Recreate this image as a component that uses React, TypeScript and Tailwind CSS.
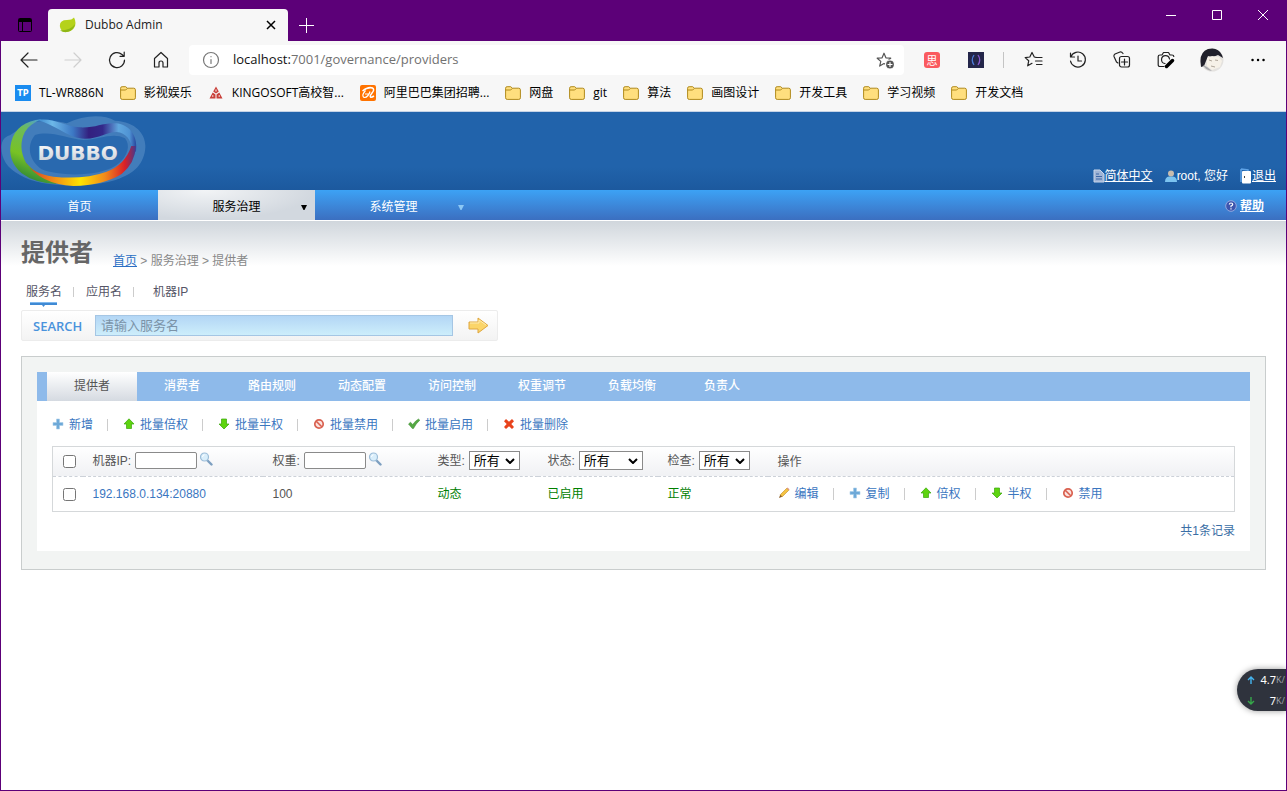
import type { ReactNode } from "react";
import clsx from "clsx";

const UI_FONT = "font-['Open_Sans','Noto_Sans_CJK_SC',sans-serif]";
const PAGE_FONT = "font-['Liberation_Sans','Noto_Sans_CJK_SC',sans-serif]";

/* --- ICONS --- */

function LineIcon({ size = 20, className, children }: { size?: number; className?: string; children: ReactNode }) {
  return (
    <svg
      width={size}
      height={size}
      viewBox="0 0 20 20"
      fill="none"
      stroke="currentColor"
      strokeWidth="1.2"
      strokeLinecap="round"
      strokeLinejoin="round"
      className={clsx("shrink-0", className)}
      aria-hidden="true"
    >
      {children}
    </svg>
  );
}

const STAR = "M8 2.200l1.900 4.600 4.800.4-3.500 3.200 1 4.700L8 12.600l-4.300 2.500 1.100-4.700L1.200 7.200 6.100 6.800z";

function FolderIcon() {
  return (
    <svg width="16" height="16" viewBox="0 0 16 16" className="shrink-0" aria-hidden="true">
      <path d="M.6 3.200q0-1.500 1.500-1.500h3.600l1.700 1.500h6.300q1.700 0 1.700 1.600v8q0 1.600-1.600 1.600H2.200q-1.600 0-1.600-1.600z" fill="#ffdf7e" stroke="#b08a1c" />
      <path d="M.8 5h4.900l1.700-1.700" fill="none" stroke="#b08a1c" />
    </svg>
  );
}

function TpIcon() {
  return (
    <span className="flex h-4 w-4 shrink-0 items-center justify-center bg-[#1a8cf0] pt-px font-['DejaVu_Sans',sans-serif] text-[8px] font-bold leading-none text-white">
      TP
    </span>
  );
}

function KingoIcon() {
  return (
    <svg width="16" height="16" viewBox="0 0 16 16" className="shrink-0" aria-hidden="true">
      <path d="M8 1.500l2.800 5L8 8.500l-2.800-2zM4.700 7.500L7.500 9.500v4H1.500zM11.300 7.500L8.500 9.500v4h6z" fill="#c9403a" />
      <path d="M8 4.500v2M4.800 10.200v1.600M11.200 10.200v1.600" stroke="#fff" />
    </svg>
  );
}

function AliIcon() {
  return (
    <svg width="16" height="16" viewBox="0 0 16 16" className="shrink-0" aria-hidden="true">
      <rect width="16" height="16" rx="2" fill="#ff7300" />
      <path d="M2.500 6Q8 1.500 12.500 3q2.500 1.500-.5 5-2.500 3-1.500 4 1 .6 3.500-1" fill="none" stroke="#fff" strokeWidth="1.500" />
      <path d="M5.500 5.500q-4 4.500-2 6.500 1.800 1.500 4.500-1.500 1.500-1.700 2-4M5 9h3.500" fill="none" stroke="#fff" strokeWidth="1.200" />
    </svg>
  );
}

function SmallIcon({ name }: { name: IconName }) {
  return (
    <svg width="12" height="12" viewBox="0 0 12 12" className="mb-[2px] shrink-0" aria-hidden="true">
      {SMALL_ICONS[name]}
    </svg>
  );
}

type IconName = "add" | "up" | "down" | "ban" | "check" | "remove" | "edit";

const SMALL_ICONS: Record<IconName, ReactNode> = {
  add: <path d="M4.500 1h3v3.500H11v3H7.500V11h-3V7.500H1v-3h3.500z" fill="#6ea9d8" stroke="#a8cdea" strokeWidth=".6" />,
  up: <path d="M6 .8L11 6H8.500v4.500h-5V6H1z" fill="#5ed40f" stroke="#3aa60c" strokeWidth=".7" />,
  down: <path d="M6 11L1 6h2.500V1h5v5H11z" fill="#5ed40f" stroke="#3aa60c" strokeWidth=".7" />,
  ban: (
    <>
      <circle cx="6" cy="6" r="4.200" fill="#fbe3df" stroke="#d9604f" strokeWidth="1.700" />
      <path d="M3.200 3.200l5.600 5.600" stroke="#d9604f" strokeWidth="1.600" />
    </>
  ),
  check: <path d="M.5 6L2.500 4.200l2.200 2.300Q7.500 2.500 10.500 1l1.300 1.200Q8 5.500 5.500 10.500H4.300z" fill="#55a843" stroke="#3a8a30" strokeWidth=".5" />,
  remove: <path d="M3 1l3 2.800L9 1l2 2.200L8.300 6 11 9l-2 2-3-2.800L3 11 1 9l2.700-3L1 3.200z" fill="#e8431c" />,
  edit: (
    <>
      <path d="M2.200 7.800L8.800 1.200l2 2-6.600 6.600z" fill="#f5c342" stroke="#c08a1e" strokeWidth=".6" />
      <path d="M2.200 7.800L1 11l3.200-1.200z" fill="#8a5a20" />
      <path d="M8.800 1.200l.8-.7 1.900 1.900-.7.800z" fill="#d98c7a" />
    </>
  ),
};

function SearchGlass() {
  return (
    <svg width="14" height="14" viewBox="0 0 14 14" className="mb-[3px] shrink-0" aria-hidden="true">
      <path d="M8.500 8.500l4 4" stroke="#7d9fc0" strokeWidth="2.400" strokeLinecap="round" />
      <circle cx="5.500" cy="5" r="4" fill="#d9eefb" stroke="#9dbdd8" strokeWidth="1.200" />
      <path d="M3.500 5q0-2 2-2.200" stroke="#fff" fill="none" />
    </svg>
  );
}

function DubboLogo() {
  return (
    <svg width="145" height="76" viewBox="3 6 435 228" role="img" aria-label="Dubbo">
      <defs>
        <linearGradient id="green" x1="0.6" y1="0" x2="0.3" y2="1">
          <stop offset="0" stopColor="#4f9fd0" />
          <stop offset=".2" stopColor="#6cbb5c" />
          <stop offset=".6" stopColor="#78c225" />
          <stop offset="1" stopColor="#1d7a3c" />
        </linearGradient>
        <linearGradient id="top" x1="0" y1="0" x2="1" y2="0">
          <stop offset="0" stopColor="#3a86cc" />
          <stop offset=".15" stopColor="#6db8e8" />
          <stop offset=".36" stopColor="#3c78c4" />
          <stop offset=".52" stopColor="#33207f" />
          <stop offset=".66" stopColor="#33298a" />
          <stop offset=".82" stopColor="#5fa6de" />
          <stop offset=".93" stopColor="#4f93d4" />
          <stop offset="1" stopColor="#25449b" />
        </linearGradient>
        <linearGradient id="warm" x1="0" y1="0" x2="1" y2="0">
          <stop offset="0" stopColor="#c9352a" />
          <stop offset=".22" stopColor="#ee7d1a" />
          <stop offset=".5" stopColor="#ffe400" />
          <stop offset=".72" stopColor="#f18a1b" />
          <stop offset=".9" stopColor="#d91f26" />
          <stop offset="1" stopColor="#43388f" />
        </linearGradient>
        <linearGradient id="word" x1="0" y1="0" x2="0" y2="1">
          <stop offset="0" stopColor="#fff" />
          <stop offset="1" stopColor="#c3c9d2" />
        </linearGradient>
      </defs>
      <path
        d="M50 62C80 32 150 25 200 40C250 15 310 12 345 32C410 35 438 75 436 112C434 160 400 190 370 200C310 232 130 240 60 195C20 175 4 145 4 112C5 90 15 80 30 76z"
        fill="#8fb8e0"
        opacity=".3"
      />
      <path
        d="M105 75C80 105 85 150 125 178C180 200 300 200 350 165C385 140 392 105 375 85C340 65 300 88 250 90C200 85 150 60 105 75z"
        fill="#2163ab"
        opacity=".75"
      />
      <path d="M125 28Q50 35 34 95 20 150 65 190 105 220 170 222L150 205Q105 190 78 158 52 110 75 65 90 42 125 28z" fill="url(#green)" />
      <path
        d="M112 30C160 22 190 48 240 52C290 54 310 36 350 40C395 46 414 85 408 125L397 122C394 90 378 68 350 66C320 66 300 86 255 86C205 86 175 48 112 30z"
        fill="url(#top)"
      />
      <path d="M75 155Q95 190 160 200 250 210 320 185 375 165 394 108L408 108Q405 160 365 192 310 226 220 228 120 222 75 155z" fill="url(#warm)" />
      <text x="233" y="151" textAnchor="middle" fontFamily="DejaVu Sans" fontWeight="700" fontSize="60" fill="url(#word)">
        DUBBO
      </text>
    </svg>
  );
}

function Avatar() {
  return (
    <svg width="24" height="24" viewBox="0 0 24 24" className="shrink-0" aria-hidden="true">
      <circle cx="12" cy="12" r="11.500" fill="#e4e2df" />
      <path d="M.5 14Q0 4 8 1q10-2.500 14 6l1 3-5-3-5 2-5-1-2 5-2 5-3 1z" fill="#20202b" />
      <path d="M7 10l5-2 7 1 3 4-2 6-8 3-5-4z" fill="#f6f1e8" />
      <path d="M9 12l3 1M15 12l3 .5M11 18l4 1" stroke="#b0a79b" />
      <path d="M3 17l4 2 5 4Q5 22 3 17z" fill="#a9a9ad" />
    </svg>
  );
}

/* --- BROWSER CHROME --- */

function TitleBar() {
  return (
    <div className="flex h-10 items-end bg-[#5c0078] text-white">
      <button className="flex h-8 w-[47px] items-center justify-center text-black" aria-label="Tab actions">
        <svg width="14" height="14" viewBox="0 0 14 14" fill="none" stroke="currentColor">
          <rect x=".5" y=".5" width="13" height="13" rx="1" />
          <path d="M1 2.500h12" strokeWidth="3" />
          <path d="M4.500 3v10" />
        </svg>
      </button>
      <div className="flex h-8 w-60 items-center rounded-t-[4px] bg-[#f7f7f7] pl-[11px] pr-3 text-[#222]">
        <svg width="17" height="16" viewBox="0 0 17 16" aria-hidden="true">
          <path d="M1 10Q0 3 8 3q5 0 7-2.500Q18 6 15 11q-3 4-8 4-5 0-6-5z" fill="#b5d21a" />
          <path d="M1 13.500q5 3 10 .5 4-2 5-7-4 6-15 6.500z" fill="#8fb717" />
        </svg>
        <span className="ml-[9px] flex-1 text-xs">Dubbo Admin</span>
        <button aria-label="Close tab" className="text-black">
          <svg width="10" height="10" viewBox="0 0 10 10" stroke="currentColor" strokeWidth="1.500">
            <path d="M1 1l8 8M9 1L1 9" />
          </svg>
        </button>
      </div>
      <button className="flex h-8 w-9 items-center justify-center" aria-label="New tab">
        <svg width="15" height="15" viewBox="0 0 15 15" stroke="currentColor">
          <path d="M7.500 0v15M0 7.500h15" />
        </svg>
      </button>
      <div className="ml-auto flex h-full">
        <button className="flex h-7 w-[46px] items-center justify-center" aria-label="Minimize">
          <svg width="10" height="10" viewBox="0 0 10 10" stroke="currentColor">
            <path d="M0 5.500h10" />
          </svg>
        </button>
        <button className="flex h-7 w-[46px] items-center justify-center" aria-label="Maximize">
          <svg width="10" height="10" viewBox="0 0 10 10" stroke="currentColor" fill="none">
            <path d="M.5.500h9v9h-9z" />
          </svg>
        </button>
        <button className="flex h-7 w-[46px] items-center justify-center" aria-label="Close">
          <svg width="10" height="10" viewBox="0 0 10 10" stroke="currentColor">
            <path d="M0 0l10 10M10 0L0 10" />
          </svg>
        </button>
      </div>
    </div>
  );
}

function ToolButton({ label, className, children }: { label: string; className?: string; children: ReactNode }) {
  return (
    <button aria-label={label} className={clsx("flex h-8 w-11 shrink-0 items-center justify-center", className)}>
      {children}
    </button>
  );
}

function AddressRow() {
  return (
    <div className="flex h-[38px] items-center px-[6px] text-[#222]">
      <ToolButton label="Back">
        <LineIcon>
          <path d="M18 10H2.500M9 3l-7 7 7 7" />
        </LineIcon>
      </ToolButton>
      <ToolButton label="Forward" className="text-[#cfcfcf]">
        <LineIcon>
          <path d="M2 10h15.500M11 3l7 7-7 7" />
        </LineIcon>
      </ToolButton>
      <ToolButton label="Refresh">
        <LineIcon>
          <path d="M17.500 10A7.500 7.500 0 1 1 15 4.500l2 1.800M17.200 2v4.300H13" />
        </LineIcon>
      </ToolButton>
      <ToolButton label="Home">
        <LineIcon>
          <path d="M3.500 8.500L10 2.500l6.500 6V17H12v-4q0-2-2-2t-2 2v4H3.500z" />
        </LineIcon>
      </ToolButton>
      <div className="ml-[6px] flex h-[30px] flex-1 items-center rounded-[4px] bg-white pl-3 pr-[9px]">
        <LineIcon className="text-[#777]">
          <circle cx="10" cy="10" r="7.500" />
          <path d="M10 9.500v4M10 6.500v.2" />
        </LineIcon>
        <span className="ml-3 flex-1 text-[13px] text-[#717171]">
          <span className="text-[#111]">localhost:</span>7001/governance/providers
        </span>
        <button aria-label="Add to favorites">
          <LineIcon className="text-[#555]">
            <path d={STAR} transform="translate(1 1)" />
            <circle cx="15" cy="14.500" r="4.500" fill="#555" stroke="#fff" />
            <path d="M15 12.500v4M13 14.500h4" stroke="#fff" />
          </LineIcon>
        </button>
      </div>
      <ToolButton label="Extension" className="ml-[6px]">
        <span className="flex h-4 w-4 items-center justify-center rounded-[3px] bg-[#fa5a5f] text-[11px] leading-none text-white">
          思
        </span>
      </ToolButton>
      <ToolButton label="Extension">
        <svg width="16" height="16" viewBox="0 0 16 16" aria-hidden="true">
          <path d="M0 0h16v16H0z" fill="#24264a" />
          <path d="M6 3Q2.500 8 6 13" stroke="#4c7bd8" strokeWidth="1.300" fill="none" />
          <path d="M10 3q3.500 5 0 10" stroke="#8a5ad0" strokeWidth="1.300" fill="none" />
        </svg>
      </ToolButton>
      <span className="ml-[5px] mr-2 h-4 w-px bg-[#c4c4c4]" />
      <ToolButton label="Favorites">
        <LineIcon>
          <path d="M12 7.300L10.300 7 8 2.500 5.800 7l-4.600.6 3.500 3.200-1 5L8 13.300M12.500 7.500H18M11.500 11H18M12.500 14.500H18" />
        </LineIcon>
      </ToolButton>
      <ToolButton label="History">
        <LineIcon>
          <path d="M2.500 3v4h4M2.800 7A7.500 7.500 0 1 1 2.500 11M10 6v5h3.500" />
        </LineIcon>
      </ToolButton>
      <ToolButton label="Collections">
        <LineIcon>
          <path d="M6 13L4.500 12 2 6.500Q1.500 5 3 4l5-2q1.500-.5 3 1.500" />
          <rect x="7.500" y="6.500" width="10" height="10.500" rx="2" />
          <path d="M12.500 9v6M9.500 12h6" />
        </LineIcon>
      </ToolButton>
      <ToolButton label="Web capture">
        <LineIcon>
          <path d="M8 16.500H4q-1.800 0-1.800-1.800V6.500Q2.200 5 4 5h2l1.500-2.500h5L14 5h2q1.800 0 1.800 1.500" />
          <path d="M9 13.500A4 4 0 1 1 13.500 9" />
          <path d="M10.500 16.500l6-6" strokeWidth="3.500" stroke="#000" />
        </LineIcon>
      </ToolButton>
      <button aria-label="Profile" className="flex h-8 w-12 items-center justify-center">
        <Avatar />
      </button>
      <ToolButton label="Settings and more">
        <LineIcon>
          <path d="M4.500 10h.1M10 10h.1M15.500 10h.1" strokeWidth="2.400" stroke="#000" />
        </LineIcon>
      </ToolButton>
    </div>
  );
}

const BOOKMARKS: { label: string; icon?: ReactNode }[] = [
  { label: "TL-WR886N", icon: <TpIcon /> },
  { label: "影视娱乐" },
  { label: "KINGOSOFT高校智...", icon: <KingoIcon /> },
  { label: "阿里巴巴集团招聘...", icon: <AliIcon /> },
  { label: "网盘" },
  { label: "git" },
  { label: "算法" },
  { label: "画图设计" },
  { label: "开发工具" },
  { label: "学习视频" },
  { label: "开发文档" },
];

function Bookmarks() {
  return (
    <nav className="flex h-8 items-center gap-4 overflow-hidden whitespace-nowrap pb-1 pl-[14px] text-xs text-black">
      {BOOKMARKS.map((item) => (
        <a key={item.label} href="#" className="flex items-center gap-2">
          {item.icon ?? <FolderIcon />}
          {item.label}
        </a>
      ))}
    </nav>
  );
}

/* --- DUBBO PAGE --- */

function Header() {
  return (
    <header className="flex h-[78px] items-start justify-between bg-linear-to-b from-[#2163ab] from-70% to-[#1c599e] text-xs text-white">
      <DubboLogo />
      <div className="flex gap-3 self-end pb-[6px] pr-[10px]">
        <a href="#" className="flex items-center underline">
          <svg width="12" height="14" viewBox="0 0 12 14" aria-hidden="true">
            <path d="M1 1h6l4 4v8H1z" fill="#9fb4d6" stroke="#c9d6ea" />
            <path d="M3 5h3M3 7.500h6M3 10h6" stroke="#3c66a6" />
          </svg>
          简体中文
        </a>
        <span className="flex items-center">
          <svg width="12" height="14" viewBox="0 0 12 14" aria-hidden="true">
            <path d="M0 13q0-5 4-5.500h4q4 .5 4 5.500z" fill="#7cc3f0" />
            <circle cx="6" cy="4.500" r="3" fill="#c8bcae" />
          </svg>
          root, 您好
        </span>
        <a href="#" className="flex items-center underline">
          <svg width="12" height="16" viewBox="0 0 12 16" aria-hidden="true">
            <path d="M1 1l7 1v2M1 1v13" fill="none" stroke="#5fa3e6" strokeWidth="1.500" />
            <rect x="2" y="3" width="9" height="12.500" rx="1" fill="#fff" />
            <path d="M4 8h1v2H4z" fill="#444" />
          </svg>
          退出
        </a>
      </div>
    </header>
  );
}

function Arrow({ className }: { className?: string }) {
  return (
    <svg width="6" height="5" viewBox="0 0 6 5" className={clsx("justify-self-end", className)} aria-hidden="true">
      <path d="M0 0h6L3.500 5h-1z" fill="currentColor" />
    </svg>
  );
}

function MainNav() {
  const item = "grid h-[30px] w-[157px] grid-cols-[1fr_auto_1fr] items-center px-2 pt-1";
  return (
    <nav className="flex h-[31px] border-b border-white bg-linear-to-b from-[#3ca2f5] to-[#3b6fc0] text-xs text-white">
      <a href="#" className={item}>
        <span className="col-start-2">首页</span>
      </a>
      <a href="#" className={clsx(item, "bg-[radial-gradient(ellipse_at_30%_0%,#f2f4f6,#d2d8df_70%)] text-black")}>
        <span className="col-start-2">服务治理</span>
        <Arrow />
      </a>
      <a href="#" className={item}>
        <span className="col-start-2">系统管理</span>
        <Arrow className="text-[#8cc8f5]" />
      </a>
      <a href="#" className="ml-auto flex items-center gap-[3px] pr-[22px] pt-[2px] font-bold">
        <svg width="12" height="12" viewBox="0 0 12 12" aria-hidden="true">
          <circle cx="6" cy="6" r="5.300" fill="#3d55ae" stroke="#93a8df" />
          <path d="M4.300 4.500Q4.500 3 6 3q1.700 0 1.700 1.400Q7.700 5.500 6 6v1.200M6 8.200v1.200" fill="none" stroke="#fff" strokeWidth="1.200" />
        </svg>
        <span className="underline">帮助</span>
      </a>
    </nav>
  );
}

function ActionList({ actions }: { actions: { icon: IconName; label: string }[] }) {
  return (
    <div className="flex items-center text-[#3a76bf]">
      {actions.map((action, i) => (
        <div key={action.label} className="flex items-center">
          {i > 0 && <span className="ml-[14px] mr-[15px] h-3 w-px bg-[#ccc]" />}
          <a href="#" className="flex items-center gap-[5px] whitespace-nowrap">
            <SmallIcon name={action.icon} />
            {action.label}
          </a>
        </div>
      ))}
    </div>
  );
}

const TABS = ["提供者", "消费者", "路由规则", "动态配置", "访问控制", "权重调节", "负载均衡", "负责人"];

const BATCH_ACTIONS: { icon: IconName; label: string }[] = [
  { icon: "add", label: "新增" },
  { icon: "up", label: "批量倍权" },
  { icon: "down", label: "批量半权" },
  { icon: "ban", label: "批量禁用" },
  { icon: "check", label: "批量启用" },
  { icon: "remove", label: "批量删除" },
];

const ROW_ACTIONS: { icon: IconName; label: string }[] = [
  { icon: "edit", label: "编辑" },
  { icon: "add", label: "复制" },
  { icon: "up", label: "倍权" },
  { icon: "down", label: "半权" },
  { icon: "ban", label: "禁用" },
];

function FilterInput({ label }: { label: string }) {
  return (
    <div className="flex items-center gap-[2px] pb-[2px]">
      <label className="flex items-center gap-1">
        {label}:
        <input type="text" className="h-[17px] w-[62px] rounded-[2px] border border-[#8a8a8a] bg-white px-1 text-black" />
      </label>
      <button aria-label={`搜索${label}`}>
        <SearchGlass />
      </button>
    </div>
  );
}

function FilterSelect({ label, wide }: { label: string; wide?: boolean }) {
  return (
    <label className="flex items-center gap-1 pb-[2px]">
      {label}:
      <select
        className={clsx(
          "h-[19px] appearance-none border border-[#8a8a8a] bg-white pl-1 text-[13px] leading-none text-black",
          wide ? "w-16" : "w-[51px]"
        )}
      >
        <option>所有</option>
      </select>
      <svg width="10" height="6" viewBox="0 0 10 6" className="pointer-events-none -ml-[19px]" aria-hidden="true">
        <path d="M1 1l4 4 4-4" fill="none" stroke="#000" strokeWidth="2" />
      </svg>
    </label>
  );
}

function ProviderTable() {
  return (
    <table className="w-full table-fixed border-collapse border border-[#d5d8da] text-left [&_td]:px-[10px] [&_td]:py-0 [&_th]:px-[10px] [&_th]:py-0 [&_th]:font-normal">
      <colgroup>
        <col className="w-[30px]" />
        <col className="w-[180px]" />
        <col className="w-[165px]" />
        <col className="w-[110px]" />
        <col className="w-[120px]" />
        <col className="w-[110px]" />
        <col />
      </colgroup>
      <thead>
        <tr className="h-[30px] border-b border-dashed border-[#ccd1d8] bg-linear-to-b from-white to-[#f0f1f4]">
          <th>
            <input type="checkbox" aria-label="全选" className="block h-[13px] w-[13px]" />
          </th>
          <th>
            <FilterInput label="机器IP" />
          </th>
          <th>
            <FilterInput label="权重" />
          </th>
          <th>
            <FilterSelect label="类型" />
          </th>
          <th>
            <FilterSelect label="状态" wide />
          </th>
          <th>
            <FilterSelect label="检查" />
          </th>
          <th>操作</th>
        </tr>
      </thead>
      <tbody>
        <tr className="h-[35px]">
          <td>
            <input type="checkbox" aria-label="192.168.0.134:20880" className="block h-[13px] w-[13px]" />
          </td>
          <td>
            <a href="#" className="text-[#3a76bf]">
              192.168.0.134:20880
            </a>
          </td>
          <td>100</td>
          <td className="text-[#008000]">动态</td>
          <td className="text-[#008000]">已启用</td>
          <td className="text-[#008000]">正常</td>
          <td>
            <ActionList actions={ROW_ACTIONS} />
          </td>
        </tr>
      </tbody>
    </table>
  );
}

function SearchPanel() {
  return (
    <>
      <div className="flex h-4 items-center pl-[5px] leading-4 text-[#556]">
        <a href="#">服务名</a>
        <span className="ml-[11px] mr-3 h-[10px] w-px bg-[#ccc]" />
        <a href="#">应用名</a>
        <span className="ml-[11px] mr-[19px] h-[10px] w-px bg-[#ccc]" />
        <a href="#">机器IP</a>
      </div>
      <svg width="27" height="5" viewBox="0 0 27 5" className="ml-[9px] mt-[2px]" aria-hidden="true">
        <path d="M0 0h27v3H15l-1.500 2L12 3H0z" fill="#3f8ad4" />
        <path d="M0 0h27v1H0z" fill="#7fb8ee" />
      </svg>
      <form
        className="mt-[3px] flex h-[31px] w-[477px] items-center rounded-[2px] border border-[#ececec] bg-linear-to-b from-white to-[#f3f3f3]"
        onSubmit={(e) => e.preventDefault()}
      >
        <label htmlFor="keyword" className="w-[73px] pl-[11px] font-['Open_Sans',sans-serif] text-[13px] font-semibold text-[#4a93dc]">
          SEARCH
        </label>
        <input
          id="keyword"
          type="text"
          placeholder="请输入服务名"
          className="h-[21px] flex-1 border border-[#a5c6e4] bg-linear-to-b from-[#b3d6f5] to-[#cdeefb] px-[5px] text-[13px] placeholder:text-[#7b93a8]"
        />
        <button type="submit" aria-label="搜索" className="ml-[15px] mr-2">
          <svg width="21" height="17" viewBox="0 0 21 17" aria-hidden="true">
            <path d="M1 5h9V1l10 7.500L10 16v-4H1z" fill="#fbd56a" stroke="#dfa63e" strokeLinejoin="round" />
            <path d="M2 6h9V3l7 5" fill="none" stroke="#fdebb0" />
          </svg>
        </button>
      </form>
    </>
  );
}

function SpeedMeter() {
  return (
    <div className="absolute right-0 top-[668px] flex h-[42px] w-[49px] flex-col justify-around rounded-l-full bg-[#2f333d] pl-[10px] text-[11px] leading-none text-white shadow-[0_0_6px_rgba(0,0,0,0.4)]">
      <div className="flex items-center">
        <svg width="8" height="8" viewBox="0 0 8 8" fill="none" stroke="#45b5f0" strokeWidth="1.400" className="shrink-0">
          <path d="M4 8V1M1 4l3-3 3 3" />
        </svg>
        <span className="w-[21px] shrink-0 text-right">4.7</span>
        <span className="text-[9px] text-[#9a9da5]">K/</span>
      </div>
      <div className="flex items-center">
        <svg width="8" height="8" viewBox="0 0 8 8" fill="none" stroke="#36a84a" strokeWidth="1.400" className="shrink-0">
          <path d="M4 0v7M1 4l3 3 3-3" />
        </svg>
        <span className="w-[21px] shrink-0 text-right">7</span>
        <span className="text-[9px] text-[#9a9da5]">K/</span>
      </div>
    </div>
  );
}

export default function App() {
  return (
    <div className="relative min-h-screen overflow-hidden border border-[#5c0078] bg-white">
      <div className={clsx(UI_FONT, "border-b border-[#c5d3e6] bg-[#f7f7f7]")}>
        <TitleBar />
        <AddressRow />
        <Bookmarks />
      </div>

      <div className={PAGE_FONT}>
        <Header />
        <MainNav />
        <main className="bg-linear-to-b from-[#d0d6dc] to-white to-[45px] px-5 pt-4 text-xs leading-4 text-[#555]">
          <div className="flex h-8 items-end gap-5">
            <h1 className="text-2xl font-bold leading-8 text-[#666]">提供者</h1>
            <div className="text-[#888]">
              <a href="#" className="text-[#2a6fc4] underline">
                首页
              </a>
              {" > 服务治理 > 提供者"}
            </div>
          </div>
          <div className="mt-[15px]">
            <SearchPanel />
          </div>

          <section className="mt-[15px] border border-[#c9cdcd] bg-[#f2f4f3] px-[15px] pb-[18px] pt-[15px]">
            <div className="bg-white">
              <div className="flex h-[29px] bg-[#8ebaea] pl-[10px]">
                {TABS.map((tab, i) => (
                  <a
                    key={tab}
                    href="#"
                    className={clsx(
                      "flex w-[90px] items-center justify-center pb-[2px]",
                      i === 0 ? "bg-linear-to-b from-white to-[#d5dae1] text-[#555]" : "font-medium text-white"
                    )}
                  >
                    {tab}
                  </a>
                ))}
              </div>
              <div className="px-[15px] pb-3 pt-4">
                <ActionList actions={BATCH_ACTIONS} />
                <div className="mt-[13px]">
                  <ProviderTable />
                </div>
                <div className="mt-[11px] text-right text-[#3a6ea5]">共1条记录</div>
              </div>
            </div>
          </section>
        </main>
      </div>

      <SpeedMeter />
    </div>
  );
}
